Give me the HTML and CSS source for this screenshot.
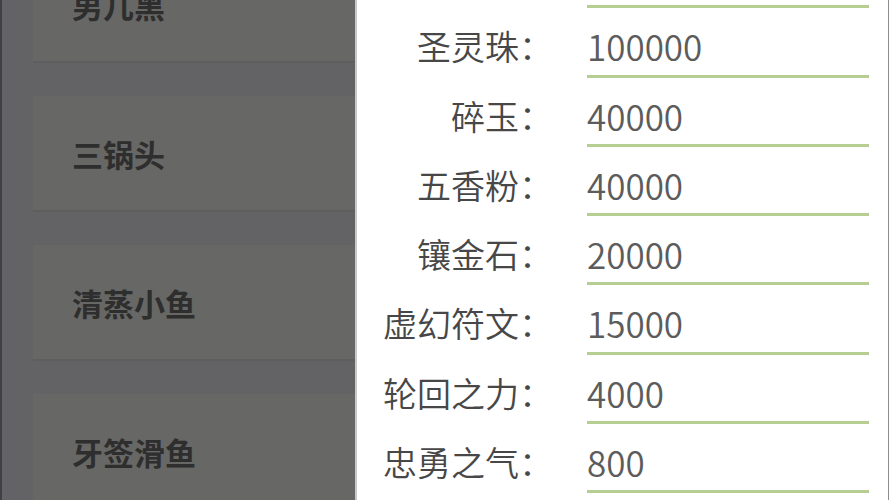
FILE: index.html
```html
<!DOCTYPE html>
<html lang="zh-CN">
<head>
<meta charset="utf-8">
<title>配置</title>
<link rel="stylesheet" href="styles.css">
</head>
<body>
<div class="screen">
  <div class="list-pane">
    <div class="list">
      <div class="card">男几黑</div>
      <div class="card">三锅头</div>
      <div class="card">清蒸小鱼</div>
      <div class="card">牙签滑鱼</div>
    </div>
  </div>
  <div class="form-pane">
    <div class="form">
      <div class="row"><div class="label">金币：</div><div class="value">500000</div></div>
      <div class="row"><div class="label">圣灵珠：</div><div class="value">100000</div></div>
      <div class="row"><div class="label">碎玉：</div><div class="value">40000</div></div>
      <div class="row"><div class="label">五香粉：</div><div class="value">40000</div></div>
      <div class="row"><div class="label">镶金石：</div><div class="value">20000</div></div>
      <div class="row"><div class="label">虚幻符文：</div><div class="value">15000</div></div>
      <div class="row"><div class="label">轮回之力：</div><div class="value">4000</div></div>
      <div class="row"><div class="label">忠勇之气：</div><div class="value">800</div></div>
    </div>
  </div>
</div>
</body>
</html>
```

FILE: styles.css
```css
html, body {
  margin: 0;
  padding: 0;
  background: #ffffff;
}

body {
  font-family: "Noto Sans CJK SC", "Noto Sans", sans-serif;
}

.screen {
  display: flex;
  width: 889px;
  height: 500px;
  overflow: hidden;
}

.list-pane {
  width: 355px;
  flex: none;
  box-sizing: border-box;
  background: #636264;
  border-left: 2px solid #403f43;
  padding-left: 31px;
  overflow: hidden;
}

.list {
  display: flex;
  flex-direction: column;
  gap: 33px;
  margin-top: -53px;
}

.card {
  height: 116px;
  box-sizing: border-box;
  background: #676765;
  border-bottom: 2px solid #5e5e5f;
  padding-left: 39px;
  display: flex;
  align-items: center;
  font-size: 31px;
  font-weight: 700;
  color: #2e2e2e;
}

.form-pane {
  flex: 1;
  box-sizing: border-box;
  background: #ffffff;
  border-left: 2px solid #c9c9c9;
  border-right: 1px solid #8d8d8d;
  overflow: hidden;
}

.form {
  display: flex;
  flex-direction: column;
  margin-top: -61px;
}

.row {
  display: flex;
  height: 69.3px;
  gap: 34px;
}

.label {
  width: 196px;
  flex: none;
  box-sizing: border-box;
  padding-top: 13px;
  line-height: 50px;
  font-size: 34px;
  font-weight: 350;
  text-align: right;
  color: #474747;
}

.value {
  width: 282px;
  flex: none;
  box-sizing: border-box;
  padding-top: 13px;
  line-height: 50px;
  font-size: 35px;
  font-weight: 350;
  color: #5c5c5c;
  border-bottom: 3px solid #b6ce92;
}
```
